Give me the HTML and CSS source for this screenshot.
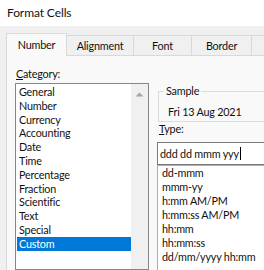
FILE: index.html
```html
<!DOCTYPE html>
<html>
<head>
<meta charset="utf-8">
<link rel="stylesheet" href="styles.css">
</head>
<body>
<div class="dialog">
  <div class="title">Format Cells</div>
  <div class="tabstrip">
    <div class="tab active">Number</div>
    <div class="tab w-align">Alignment</div>
    <div class="tab w-font">Font</div>
    <div class="tab w-border">Border</div>
    <div class="tab w-fill"></div>
  </div>
  <div class="panel">
    <div class="left">
      <div class="label"><u>C</u>ategory:</div>
      <div class="listbox">
        <ul class="items">
          <li>General</li>
          <li>Number</li>
          <li>Currency</li>
          <li>Accounting</li>
          <li>Date</li>
          <li>Time</li>
          <li>Percentage</li>
          <li>Fraction</li>
          <li>Scientific</li>
          <li>Text</li>
          <li>Special</li>
          <li class="selected">Custom</li>
        </ul>
        <div class="scrollbar">
          <svg class="arrow" width="9" height="5" viewBox="0 0 9 5"><path d="M0.5 4.5 L4.5 0.5 L8.5 4.5 Z" fill="#a6a6a6"/></svg>
        </div>
      </div>
    </div>
    <div class="right">
      <div class="group">
        <div class="legend">Sample</div>
        <div class="sample">Fri 13 Aug 2021</div>
      </div>
      <div class="label type-label"><u>T</u>ype:</div>
      <div class="textbox">ddd dd mmm yyy<span class="caret"></span></div>
      <ul class="typelist">
        <li>dd-mmm</li>
        <li>mmm-yy</li>
        <li>h:mm AM/PM</li>
        <li>h:mm:ss AM/PM</li>
        <li>hh:mm</li>
        <li>hh:mm:ss</li>
        <li>dd/mm/yyyy hh:mm</li>
      </ul>
    </div>
  </div>
</div>
</body>
</html>
```
FILE: styles.css
```css
html, body {
  margin: 0;
  padding: 0;
}
body {
  width: 264px;
  height: 270px;
  overflow: hidden;
  background: #f0f0f0;
  font-family: "Lato", "Noto Sans", sans-serif;
  font-size: 10.8px;
  letter-spacing: -0.2px;
  color: #111;
}
.dialog {
  width: 264px;
  height: 270px;
  display: flex;
  flex-direction: column;
}
.title {
  height: 26px;
  line-height: 26px;
  padding-left: 7px;
  background: #fff;
  font-size: 12px;
  letter-spacing: -0.1px;
  flex: none;
}
.tabstrip {
  height: 29px;
  flex: none;
  display: flex;
  align-items: flex-end;
  padding-left: 6px;
  background: #f0f0f0;
  position: relative;
  z-index: 1;
}
.tab {
  height: 19px;
  line-height: 19px;
  border: 1px solid #d9d9d9;
  border-bottom: none;
  border-left: none;
  text-align: center;
  background: #f0f0f0;
  flex: none;
  box-sizing: content-box;
}
.tab.active {
  width: 59px;
  height: 22px;
  line-height: 22px;
  border-left: 1px solid #d9d9d9;
  background: #f9f9f9;
  margin-bottom: -1px;
}
.w-align { width: 66px; }
.w-font { width: 57px; }
.w-border { width: 59px; }
.w-fill { width: 40px; }
.panel {
  flex: 1;
  margin-left: 6px;
  border-left: 1px solid #d9d9d9;
  border-top: 1px solid #d9d9d9;
  background: #f9f9f9;
  display: flex;
  gap: 8px;
  padding: 11px 0 0 8px;
  overflow: hidden;
}
.label {
  height: 14px;
  line-height: 14px;
  padding-left: 1px;
}
.left {
  flex: none;
  width: 134px;
  display: flex;
  flex-direction: column;
}
.listbox {
  margin-top: 2px;
  border: 1px solid #828790;
  background: #fff;
  height: 200px;
  display: flex;
}
.items {
  list-style: none;
  margin: 0;
  padding: 1px 0 0 1px;
  flex: 1;
}
.items li {
  height: 13.8px;
  line-height: 13.8px;
  padding-left: 2px;
}
.items li.selected {
  background: #0078d7;
  color: #fff;
}
.scrollbar {
  width: 17px;
  flex: none;
  background: #f0f0f0;
  display: flex;
  justify-content: center;
  padding-top: 8px;
  box-sizing: border-box;
}
.arrow {
  display: block;
}
.right {
  flex: none;
  width: 140px;
  display: flex;
  flex-direction: column;
}
.group {
  margin-top: 24px;
  margin-left: 1px;
  border: 1px solid #dcdcdc;
  position: relative;
  padding: 13px 0 0 9px;
  box-sizing: border-box;
  height: 33px;
}
.legend {
  position: absolute;
  left: 5px;
  top: -8px;
  padding: 0 2px;
  line-height: 14px;
  background: #f9f9f9;
}
.sample {
  line-height: 14px;
}
.type-label {
  margin-top: 0;
  margin-left: 1px;
}
.textbox {
  margin-top: 6px;
  height: 21px;
  line-height: 21px;
  border: 1px solid #7a7a7a;
  background: #fff;
  padding-left: 2px;
}
.caret {
  display: inline-block;
  width: 1px;
  height: 13px;
  background: #000;
  vertical-align: -2px;
  margin-left: 1px;
}
.typelist {
  list-style: none;
  margin: 0;
  padding: 0 0 0 4px;
  border: 1px solid #acacac;
  border-bottom: none;
  background: #fff;
  height: 120px;
}
.typelist li {
  height: 14px;
  line-height: 14px;
}
```
